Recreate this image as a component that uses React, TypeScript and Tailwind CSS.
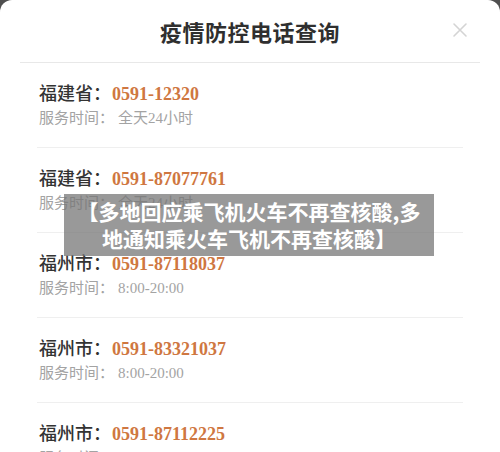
const contacts = [
  { area: "福建省", phone: "0591-12320", hours: "全天24小时" },
  { area: "福建省", phone: "0591-87077761", hours: "全天24小时" },
  { area: "福州市", phone: "0591-87118037", hours: "8:00-20:00" },
  { area: "福州市", phone: "0591-83321037", hours: "8:00-20:00" },
  { area: "福州市", phone: "0591-87112225", hours: "8:00-20:00" },
];

const serif = "font-['Liberation_Serif','Noto_Sans_CJK_SC',serif]";

function CloseIcon() {
  return (
    <svg width="16" height="16" viewBox="0 0 16 16" fill="none">
      <path d="M2 2L14 14M14 2L2 14" stroke="#d4d4d4" strokeWidth="1.6" strokeLinecap="round" />
    </svg>
  );
}

export default function App() {
  return (
    <div className="relative w-[500px] bg-[#4f4f4f] font-['Noto_Sans_CJK_SC',sans-serif]">
      <div className="bg-white rounded-t-[12px]">
        <div className="relative mx-[20px] h-[63px] flex items-center justify-center border-b border-[#e8e8e8]">
          <h2 className="text-[22px] font-bold text-[#2f2f2f] tracking-[0.5px]">疫情防控电话查询</h2>
          <button className="absolute right-[12px] top-[22px]">
            <CloseIcon />
          </button>
        </div>

        <div className="px-[37px]">
          {contacts.map((c, i) => (
            <div
              key={i}
              className={`pl-[2px] pt-[19px] pb-[19px] ${i > 0 ? "border-t border-[#efefef]" : ""}`}
            >
              <div className={`flex items-center h-[24px] text-[18px] ${serif}`}>
                <span className="text-[#333] font-medium">{c.area}：</span>
                <span className="ml-[1px] text-[#cf7741] font-bold">{c.phone}</span>
              </div>
              <div className={`mt-[2px] h-[20px] flex items-center text-[15px] text-[#a3a3a3] ${serif}`}>
                <span>服务时间：</span>
                <span className="ml-[4px]">{c.hours}</span>
              </div>
            </div>
          ))}
        </div>
      </div>

      <div className="absolute left-[64px] top-[194px] w-[370px] h-[62px] bg-[rgba(118,118,118,0.74)] px-[12px] flex items-center justify-center">
        <p className="text-white text-[21px] font-bold leading-[27px] text-center">
          【多地回应乘飞机火车不再查核酸,多地通知乘火车飞机不再查核酸】
        </p>
      </div>
    </div>
  );
}
